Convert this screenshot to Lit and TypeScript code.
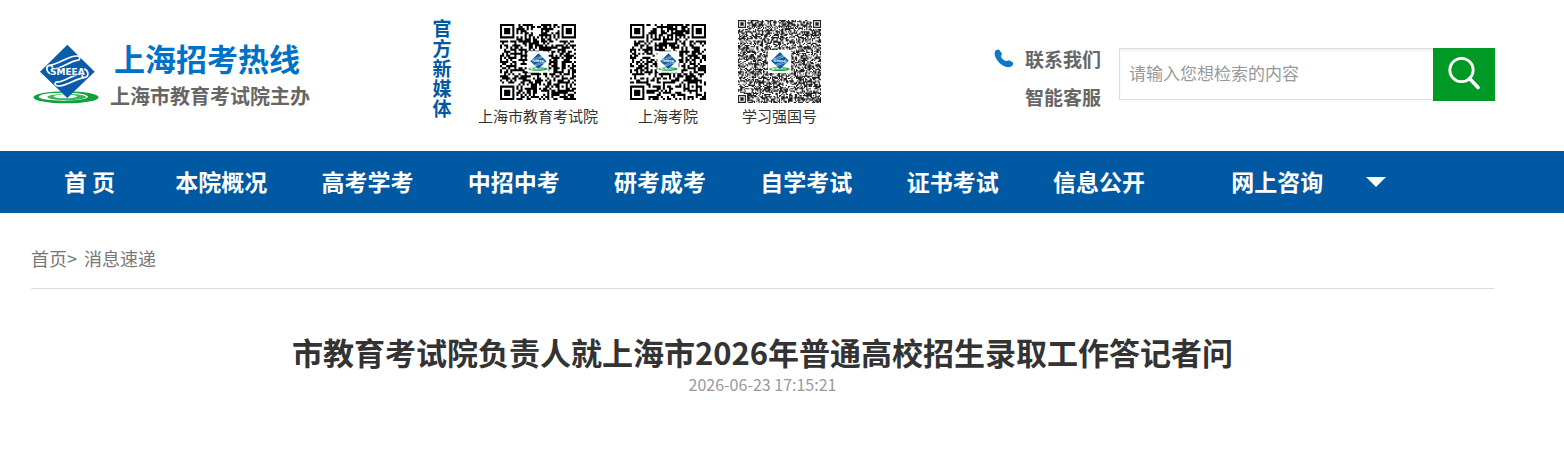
import { LitElement, html, css, svg } from "lit";
import { customElement, property } from "lit/decorators.js";

const emblem = svg`
  <ellipse cx="108" cy="172" rx="98" ry="18" fill="#12a03c"></ellipse>
  <ellipse cx="100" cy="170" rx="74" ry="12" fill="#ffffff"></ellipse>
  <ellipse cx="110" cy="171" rx="58" ry="10" fill="#3db45c"></ellipse>
  <ellipse cx="106" cy="169" rx="36" ry="6" fill="#e9f7ec"></ellipse>
  <path d="M112 14L194 95L112 174L30 95Z" fill="#0a5ca8"></path>
  <path d="M60 101C46 92 48 76 60 76C68 76 70 84 66 88M58 76C90 72 116 46 142 48C154 50 150 63 140 61C116 66 98 84 66 88"
    fill="none" stroke="#ffffff" stroke-width="5" stroke-linecap="round"></path>
  <path d="M164 87C178 94 176 112 164 112C156 112 154 105 158 100M166 112C134 116 112 138 84 138C70 136 74 124 86 126C108 122 128 104 158 100"
    fill="none" stroke="#ffffff" stroke-width="5" stroke-linecap="round"></path>
  <text x="112" y="104" text-anchor="middle" font-family="DejaVu Sans, sans-serif" font-size="27"
    font-weight="700" fill="#ffffff" stroke="#0a5ca8" stroke-width="3" paint-order="stroke">SMEEA</text>
`;

@customElement("qr-code")
class QrCode extends LitElement {
  @property({ type: Number }) modules = 37;
  @property({ type: Number }) seed = 1;
  @property({ type: Number }) size = 76;
  @property() ink = "#000000";

  static styles = css`
    :host { display: block; line-height: 0; }
  `;

  private finder(x: number, y: number): boolean | null {
    const n = this.modules;
    for (const [fx, fy] of [[0, 0], [n - 7, 0], [0, n - 7]]) {
      const dx = x - fx;
      const dy = y - fy;
      if (dx < -1 || dx > 7 || dy < -1 || dy > 7) continue;
      const ring = Math.max(Math.abs(dx - 3), Math.abs(dy - 3));
      return ring === 3 || ring <= 1;
    }
    return null;
  }

  private cells(): string {
    const n = this.modules;
    let state = this.seed * 7919 + 17;
    let d = "";
    for (let y = 0; y < n; y++) {
      let start = -1;
      for (let x = 0; x <= n; x++) {
        let on = false;
        if (x < n) {
          state = (Math.imul(state, 1664525) + 1013904223) >>> 0;
          const fixed = this.finder(x, y);
          const align = Math.max(Math.abs(x - (n - 7)), Math.abs(y - (n - 7)));
          if (fixed !== null) on = fixed;
          else if (align <= 2) on = align !== 1;
          else if (x === 6 || y === 6) on = (x + y) % 2 === 0;
          else on = state / 4294967296 < 0.54;
        }
        if (on && start < 0) start = x;
        if (!on && start >= 0) {
          d += `M${start} ${y}h${x - start}v1h${start - x}z`;
          start = -1;
        }
      }
    }
    return d;
  }

  render() {
    const n = this.modules;
    const box = n * 0.28;
    const at = (n - box) / 2;
    return html`<svg width=${this.size} height=${this.size} viewBox="0 0 ${n} ${n}" aria-hidden="true">
      <rect width=${n} height=${n} fill="#ffffff"></rect>
      <path d=${this.cells()} fill=${this.ink}></path>
      <rect x=${at} y=${at} width=${box} height=${box} rx="0.6" fill="#ffffff"></rect>
      <svg x=${at} y=${at} width=${box} height=${box} viewBox="0 0 216 204">${emblem}</svg>
    </svg>`;
  }
}

@customElement("app-root")
class AppRoot extends LitElement {
  static styles = css`
    :host {
      display: block;
      background: #ffffff;
      color: #333333;
      font-family: "Noto Sans CJK SC", "Noto Sans", sans-serif;
    }
    * { box-sizing: border-box; }
    a { color: inherit; text-decoration: none; }
    svg { display: block; }
    .header {
      display: flex;
      align-items: flex-start;
      padding: 18px 69px 20px 31px;
    }
    .logo {
      display: flex;
      gap: 8px;
      margin-top: 20px;
      width: 401px;
      flex: none;
    }
    .emblem { margin: 2px 0 0 -1px; }
    .name { display: flex; flex-direction: column; white-space: nowrap; }
    .title {
      padding-left: 4px;
      font-size: 31px;
      line-height: 40px;
      font-weight: 700;
      color: #0072c6;
    }
    .host {
      font-size: 20px;
      line-height: 36px;
      font-weight: 700;
      color: #666666;
    }
    .media {
      width: 20px;
      flex: none;
      font-size: 19px;
      line-height: 20px;
      font-weight: 700;
      color: #0059a2;
      word-break: break-all;
      text-align: center;
    }
    .codes { display: flex; gap: 32px; margin: 2px 0 0 26px; }
    .code { margin: 0; display: flex; flex-direction: column; align-items: center; }
    .frame { height: 83px; display: flex; align-items: center; }
    .code figcaption { padding-bottom: 2px; font-size: 15px; line-height: 26px; white-space: nowrap; }
    .tools { display: flex; margin-left: auto; }
    .phone { margin: 31px 11px 0 0; }
    .contact {
      display: flex;
      flex-direction: column;
      margin: 22px 18px 0 0;
      font-size: 19px;
      line-height: 38px;
      font-weight: 700;
      color: #666666;
      white-space: nowrap;
    }
    .search { display: flex; align-items: flex-start; margin-top: 30px; }
    .field {
      width: 314px;
      height: 52px;
      padding: 0 9px 4px;
      border: 1px solid #dddddd;
      border-right: 0;
      border-radius: 0;
      box-shadow: inset 0 2px 2px #f0f0f0;
      font: inherit;
      font-size: 17px;
      color: #333333;
      outline: none;
    }
    .field::placeholder { color: #999999; opacity: 1; }
    .go {
      width: 62px;
      height: 53px;
      padding: 0 0 4px;
      border: 0;
      background: #009926;
      display: grid;
      place-items: center;
    }
    .nav {
      background: #0059a2;
      padding: 0 70px 2px 31px;
      color: #ffffff;
      font-size: 23px;
      line-height: 60px;
      font-weight: 700;
    }
    .menu { display: flex; margin: 0; padding: 0; list-style: none; }
    .item { width: 10%; text-align: center; white-space: nowrap; }
    .first { width: 8%; }
    .more { margin: 0 16px 0 32px; }
    .toggle {
      padding: 0;
      border: 0;
      background: none;
      display: flex;
      align-items: center;
      height: 62px;
      margin-bottom: -2px;
    }
    .page { padding: 0 70px 0 31px; }
    .crumbs {
      display: flex;
      gap: 7px;
      padding: 30px 0 14px;
      border-bottom: 1px solid #dddddd;
      font-size: 18px;
      line-height: 31px;
      color: #777777;
    }
    .headline {
      margin: 40px 0 0;
      font-size: 31px;
      line-height: 45px;
      font-weight: 700;
      text-align: center;
    }
    .date {
      display: block;
      font-size: 16px;
      line-height: 20px;
      color: #999999;
      text-align: center;
    }
  `;

  private codes = [
    { label: "上海市教育考试院", size: 76, modules: 37, seed: 3, ink: "#000000" },
    { label: "上海考院", size: 76, modules: 37, seed: 8, ink: "#000000" },
    { label: "学习强国号", size: 83, modules: 73, seed: 5, ink: "#222222" },
  ];

  private links = ["首 页", "本院概况", "高考学考", "中招中考", "研考成考", "自学考试", "证书考试", "信息公开", "网上咨询"];

  render() {
    return html`
      <header class="header">
        <a class="logo" href="#">
          <svg class="emblem" width="72" height="68" viewBox="0 0 216 204" aria-hidden="true">${emblem}</svg>
          <span class="name">
            <span class="title">上海招考热线</span>
            <span class="host">上海市教育考试院主办</span>
          </span>
        </a>
        <div class="media">官方新媒体</div>
        <div class="codes">
          ${this.codes.map((c) => html`
            <figure class="code">
              <div class="frame">
                <qr-code .size=${c.size} .modules=${c.modules} .seed=${c.seed} .ink=${c.ink}></qr-code>
              </div>
              <figcaption>${c.label}</figcaption>
            </figure>`)}
        </div>
        <div class="tools">
          <svg class="phone" width="20" height="19" viewBox="0 0 20 19" aria-hidden="true">
            <path d="M1 2.5C2 .6 4.4 0 5.6 1.2L7.8 4.4C8.4 5.8 6.8 6.6 7 7.6C7.8 9.6 9.6 11.4 11.8 12C13 12.2 13.6 10.8 15 11.2L18.6 13.2C20 14.4 18.6 17 16.8 17.8C13 19.2 7.4 16.6 4.2 12.6C1.4 9.2 0 5.4 1 2.5Z" fill="#0f78c8"></path>
          </svg>
          <div class="contact">
            <a href="#">联系我们</a>
            <a href="#">智能客服</a>
          </div>
          <form class="search" @submit=${(e: Event) => e.preventDefault()}>
            <input class="field" type="text" aria-label="请输入您想检索的内容" placeholder="请输入您想检索的内容" />
            <button class="go" type="submit" aria-label="搜索">
              <svg width="34" height="34" viewBox="0 0 34 34" fill="none" stroke="#ffffff">
                <circle cx="14.5" cy="14" r="11.7" stroke-width="2.8"></circle>
                <path d="M22.5 22.5L31 31.5" stroke-width="3.6" stroke-linecap="round"></path>
              </svg>
            </button>
          </form>
        </div>
      </header>
      <nav class="nav">
        <ul class="menu">
          ${this.links.map((l, i) => html`
            <li class="item ${i === 0 ? "first" : i === this.links.length - 1 ? "more" : ""}"><a href="#">${l}</a></li>`)}
          <li>
            <button class="toggle" type="button" aria-label="展开">
              <svg width="20" height="10" viewBox="0 0 20 10"><path d="M0 0H20L10 10Z" fill="#ffffff"></path></svg>
            </button>
          </li>
        </ul>
      </nav>
      <main class="page">
        <div class="crumbs"><span><a href="#">首页</a>&gt;</span><a href="#">消息速递</a></div>
        <h1 class="headline">市教育考试院负责人就上海市2026年普通高校招生录取工作答记者问</h1>
        <time class="date" datetime="2026-06-23T17:15:21">2026-06-23 17:15:21</time>
      </main>
    `;
  }
}
